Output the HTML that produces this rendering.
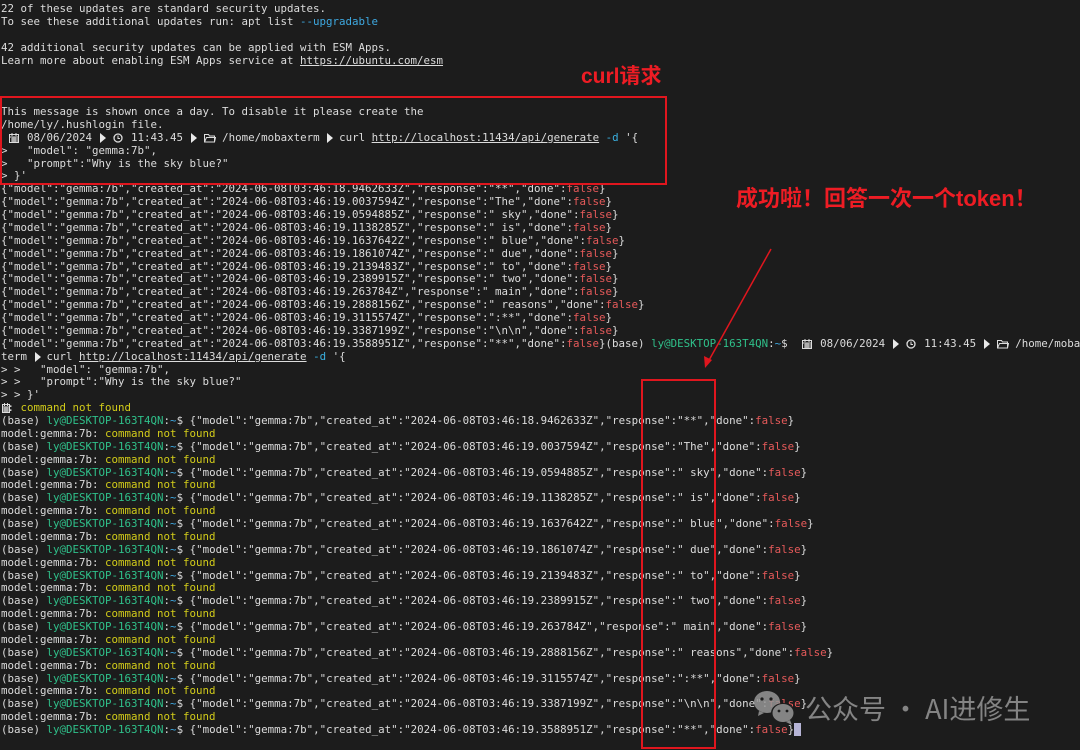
<!DOCTYPE html>
<html><head><meta charset="utf-8"><style>
html,body{margin:0;padding:0;background:#1c1c1c;width:1080px;height:750px;overflow:hidden;position:relative}
pre{position:absolute;left:1px;top:3px;margin:0;font-family:"DejaVu Sans Mono","Liberation Mono",monospace;font-size:10.8px;line-height:12.88px;color:#dcdcdc;white-space:pre}
.f{color:#e65a5a}.y{color:#d2cc1a}.g{color:#2fc08a}.bl{color:#3ea8e0}.c{color:#3ab0e0}.u{text-decoration:underline}
.ic{display:inline-block;width:13px;height:9px;vertical-align:-1px;position:relative}
.ic svg{position:absolute;left:1px;top:0}
.tri{display:inline-block;width:6.5px;height:9px;vertical-align:-1px;position:relative}
.tri:before{content:"";position:absolute;left:1px;top:0;border-left:6px solid #e8e8e8;border-top:5px solid transparent;border-bottom:5px solid transparent}
.cur{background:#b6b4d6;color:#b6b4d6}
.box{position:absolute;border:2px solid #e0161e;box-sizing:border-box}
.ann{position:absolute;color:#ee1c24;font-family:"Liberation Sans","Noto Sans CJK SC",sans-serif;font-weight:bold;white-space:nowrap}
.wm{position:absolute;left:805px;top:688px;font-family:"Noto Sans CJK SC","Liberation Sans",sans-serif;font-size:27px;color:rgba(150,150,150,.85);white-space:nowrap}
</style></head><body>
<pre>22 of these updates are standard security updates.
To see these additional updates run: apt list <span class="bl">--upgradable</span>

42 additional security updates can be applied with ESM Apps.
Learn more about enabling ESM Apps service at <span class="u">https://ubuntu.com/esm</span>



This message is shown once a day. To disable it please create the
/home/ly/.hushlogin file.
 <i class="ic"><svg width="11" height="10"><rect x=".5" y="1.5" width="9" height="8" fill="none" stroke="#ddd"/><path d="M1 4h9M3 0v3M7 0v3M2 6h7M2 8h7M4 4v6M6 4v6" stroke="#ddd"/></svg></i> 08/06/2024 <i class="tri"></i> <i class="ic"><svg width="11" height="10"><circle cx="5" cy="5" r="4" fill="none" stroke="#ddd" stroke-width="1.3"/><path d="M5 2.5v3h2" stroke="#ddd" fill="none"/></svg></i> 11:43.45 <i class="tri"></i> <i class="ic"><svg width="12" height="10"><path d="M.5 1.5h4l1 1.5h5v6h-10z" fill="none" stroke="#ddd"/><path d="M.5 9l2-4.5h9l-1 4.5" fill="none" stroke="#ddd"/></svg></i> /home/mobaxterm <i class="tri"></i> curl <span class="u">http://localhost:11434/api/generate</span> <span class="c">-d</span> '{
&gt;   "model": "gemma:7b",
&gt;   "prompt":"Why is the sky blue?"
&gt; }'
{"model":"gemma:7b","created_at":"2024-06-08T03:46:18.9462633Z","response":"**","done":<span class="f">false</span>}
{"model":"gemma:7b","created_at":"2024-06-08T03:46:19.0037594Z","response":"The","done":<span class="f">false</span>}
{"model":"gemma:7b","created_at":"2024-06-08T03:46:19.0594885Z","response":" sky","done":<span class="f">false</span>}
{"model":"gemma:7b","created_at":"2024-06-08T03:46:19.1138285Z","response":" is","done":<span class="f">false</span>}
{"model":"gemma:7b","created_at":"2024-06-08T03:46:19.1637642Z","response":" blue","done":<span class="f">false</span>}
{"model":"gemma:7b","created_at":"2024-06-08T03:46:19.1861074Z","response":" due","done":<span class="f">false</span>}
{"model":"gemma:7b","created_at":"2024-06-08T03:46:19.2139483Z","response":" to","done":<span class="f">false</span>}
{"model":"gemma:7b","created_at":"2024-06-08T03:46:19.2389915Z","response":" two","done":<span class="f">false</span>}
{"model":"gemma:7b","created_at":"2024-06-08T03:46:19.263784Z","response":" main","done":<span class="f">false</span>}
{"model":"gemma:7b","created_at":"2024-06-08T03:46:19.2888156Z","response":" reasons","done":<span class="f">false</span>}
{"model":"gemma:7b","created_at":"2024-06-08T03:46:19.3115574Z","response":":**","done":<span class="f">false</span>}
{"model":"gemma:7b","created_at":"2024-06-08T03:46:19.3387199Z","response":"\n\n","done":<span class="f">false</span>}
{"model":"gemma:7b","created_at":"2024-06-08T03:46:19.3588951Z","response":"**","done":<span class="f">false</span>}(base) <span class="g">ly@DESKTOP-163T4QN</span>:<span class="bl">~</span>$  <i class="ic"><svg width="11" height="10"><rect x=".5" y="1.5" width="9" height="8" fill="none" stroke="#ddd"/><path d="M1 4h9M3 0v3M7 0v3M2 6h7M2 8h7M4 4v6M6 4v6" stroke="#ddd"/></svg></i> 08/06/2024 <i class="tri"></i> <i class="ic"><svg width="11" height="10"><circle cx="5" cy="5" r="4" fill="none" stroke="#ddd" stroke-width="1.3"/><path d="M5 2.5v3h2" stroke="#ddd" fill="none"/></svg></i> 11:43.45 <i class="tri"></i> <i class="ic"><svg width="12" height="10"><path d="M.5 1.5h4l1 1.5h5v6h-10z" fill="none" stroke="#ddd"/><path d="M.5 9l2-4.5h9l-1 4.5" fill="none" stroke="#ddd"/></svg></i> /home/mobax
term <i class="tri"></i> curl <span class="u">http://localhost:11434/api/generate</span> <span class="c">-d</span> '{
&gt; &gt;   "model": "gemma:7b",
&gt; &gt;   "prompt":"Why is the sky blue?"
&gt; &gt; }'
<i class="ic" style="width:6.5px"><svg width="8" height="10"><rect x=".5" y="1.5" width="7" height="8" fill="none" stroke="#ddd"/><path d="M1 4h7M2.5 0v3M5.5 0v3M1 6h6M1 8h6M3 4v6M5 4v6" stroke="#ddd"/></svg></i>: <span class="y">command not found</span>
(base) <span class="g">ly@DESKTOP-163T4QN</span>:<span class="bl">~</span>$ {"model":"gemma:7b","created_at":"2024-06-08T03:46:18.9462633Z","response":"**","done":<span class="f">false</span>}
model:gemma:7b: <span class="y">command not found</span>
(base) <span class="g">ly@DESKTOP-163T4QN</span>:<span class="bl">~</span>$ {"model":"gemma:7b","created_at":"2024-06-08T03:46:19.0037594Z","response":"The","done":<span class="f">false</span>}
model:gemma:7b: <span class="y">command not found</span>
(base) <span class="g">ly@DESKTOP-163T4QN</span>:<span class="bl">~</span>$ {"model":"gemma:7b","created_at":"2024-06-08T03:46:19.0594885Z","response":" sky","done":<span class="f">false</span>}
model:gemma:7b: <span class="y">command not found</span>
(base) <span class="g">ly@DESKTOP-163T4QN</span>:<span class="bl">~</span>$ {"model":"gemma:7b","created_at":"2024-06-08T03:46:19.1138285Z","response":" is","done":<span class="f">false</span>}
model:gemma:7b: <span class="y">command not found</span>
(base) <span class="g">ly@DESKTOP-163T4QN</span>:<span class="bl">~</span>$ {"model":"gemma:7b","created_at":"2024-06-08T03:46:19.1637642Z","response":" blue","done":<span class="f">false</span>}
model:gemma:7b: <span class="y">command not found</span>
(base) <span class="g">ly@DESKTOP-163T4QN</span>:<span class="bl">~</span>$ {"model":"gemma:7b","created_at":"2024-06-08T03:46:19.1861074Z","response":" due","done":<span class="f">false</span>}
model:gemma:7b: <span class="y">command not found</span>
(base) <span class="g">ly@DESKTOP-163T4QN</span>:<span class="bl">~</span>$ {"model":"gemma:7b","created_at":"2024-06-08T03:46:19.2139483Z","response":" to","done":<span class="f">false</span>}
model:gemma:7b: <span class="y">command not found</span>
(base) <span class="g">ly@DESKTOP-163T4QN</span>:<span class="bl">~</span>$ {"model":"gemma:7b","created_at":"2024-06-08T03:46:19.2389915Z","response":" two","done":<span class="f">false</span>}
model:gemma:7b: <span class="y">command not found</span>
(base) <span class="g">ly@DESKTOP-163T4QN</span>:<span class="bl">~</span>$ {"model":"gemma:7b","created_at":"2024-06-08T03:46:19.263784Z","response":" main","done":<span class="f">false</span>}
model:gemma:7b: <span class="y">command not found</span>
(base) <span class="g">ly@DESKTOP-163T4QN</span>:<span class="bl">~</span>$ {"model":"gemma:7b","created_at":"2024-06-08T03:46:19.2888156Z","response":" reasons","done":<span class="f">false</span>}
model:gemma:7b: <span class="y">command not found</span>
(base) <span class="g">ly@DESKTOP-163T4QN</span>:<span class="bl">~</span>$ {"model":"gemma:7b","created_at":"2024-06-08T03:46:19.3115574Z","response":":**","done":<span class="f">false</span>}
model:gemma:7b: <span class="y">command not found</span>
(base) <span class="g">ly@DESKTOP-163T4QN</span>:<span class="bl">~</span>$ {"model":"gemma:7b","created_at":"2024-06-08T03:46:19.3387199Z","response":"\n\n","done":<span class="f">false</span>}
model:gemma:7b: <span class="y">command not found</span>
(base) <span class="g">ly@DESKTOP-163T4QN</span>:<span class="bl">~</span>$ {"model":"gemma:7b","created_at":"2024-06-08T03:46:19.3588951Z","response":"**","done":<span class="f">false</span>}<span class="cur">_</span></pre>

<div class="box" style="left:0;top:96px;width:667px;height:89px"></div>
<div class="box" style="left:641px;top:379px;width:75px;height:370px"></div>
<div class="ann" style="left:581px;top:60px;font-size:21px">curl请求</div>
<div class="ann" style="left:736px;top:181px;font-size:22px">成功啦！回答一次一个token！</div>
<svg style="position:absolute;left:0;top:0" width="1080" height="750"><path d="M771 249L708 362" stroke="#e0161e" stroke-width="1.5"/><path d="M705 368L704 356L712 360Z" fill="#e0161e"/></svg>

<svg style="position:absolute;left:752px;top:689px" width="46" height="38"><ellipse cx="15" cy="13" rx="13" ry="11" fill="rgba(150,150,150,.85)"/><path d="M7 22l-1 5 6-3z" fill="rgba(150,150,150,.85)"/><ellipse cx="31" cy="24" rx="12" ry="10" fill="#1c1c1c"/><ellipse cx="31" cy="24" rx="10.5" ry="9" fill="rgba(150,150,150,.85)"/><path d="M38 31l2 5-6-3z" fill="rgba(150,150,150,.85)"/><circle cx="10" cy="10" r="1.6" fill="#1c1c1c"/><circle cx="19" cy="10" r="1.6" fill="#1c1c1c"/><circle cx="27" cy="22" r="1.4" fill="#1c1c1c"/><circle cx="35" cy="22" r="1.4" fill="#1c1c1c"/></svg>
<div class="wm">公众号 · AI进修生</div>
</body></html>
